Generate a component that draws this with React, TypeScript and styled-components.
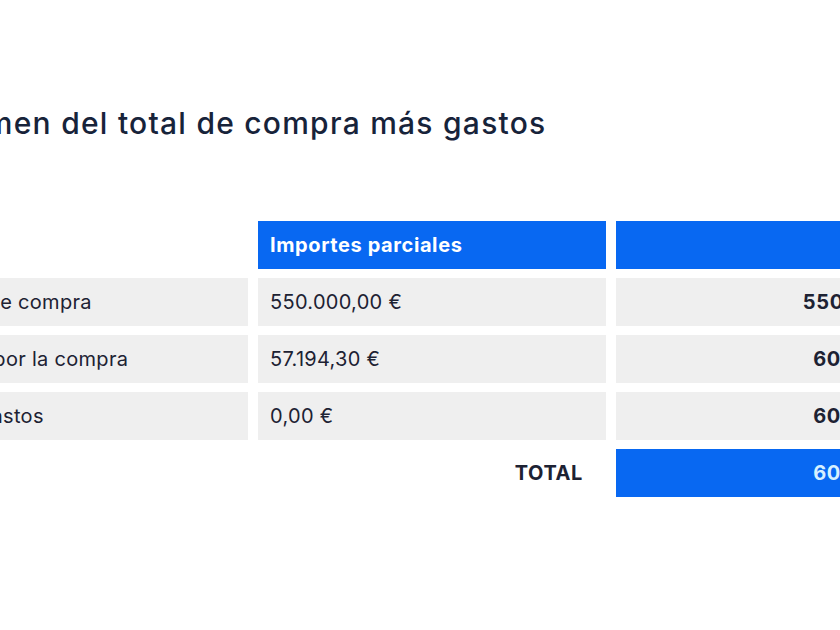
import styled, { createGlobalStyle } from "styled-components";

interface IRow {
  label: string;
  partial: string;
  accumulated: string;
}

const rows: IRow[] = [
  { label: "Precio de compra", partial: "550.000,00 €", accumulated: "550.000,00 €" },
  { label: "Gastos por la compra", partial: "57.194,30 €", accumulated: "607.194,30 €" },
  { label: "Otros gastos", partial: "0,00 €", accumulated: "607.194,30 €" },
];

const GlobalStyle = createGlobalStyle`
  html, body {
    margin: 0;
    padding: 0;
    background: #ffffff;
  }
  body {
    font-family: Inter, "Noto Sans", "Liberation Sans", sans-serif;
  }
`;

const Page = styled.div`
  width: 840px;
  height: 630px;
  overflow: hidden;
  background: #ffffff;
`;

const Content = styled.div`
  margin-left: -92px;
  padding-top: 104px;
  width: 1140px;
`;

const Title = styled.h2`
  margin: 0 0 0 2px;
  font-size: 30px;
  line-height: 38px;
  font-weight: 500;
  color: #17233a;
  letter-spacing: 1.25px;
`;

const Table = styled.div`
  margin-top: 79px;
  display: grid;
  grid-template-columns: 340px 348px 353px;
  grid-auto-rows: 48px;
  column-gap: 10px;
  row-gap: 9px;
`;

const Cell = styled.div<{ $variant?: "head" | "body" | "blank" | "total"; $align?: "left" | "right"; $bold?: boolean }>`
  display: flex;
  align-items: center;
  justify-content: ${(p) => (p.$align === "right" ? "flex-end" : "flex-start")};
  padding: 0 23px 0 12px;
  font-size: 20px;
  letter-spacing: ${(p) => (p.$bold ? "0.6px" : "0.3px")};
  white-space: nowrap;
  font-weight: ${(p) => (p.$bold ? 700 : 400)};
  background: ${(p) =>
    p.$variant === "head" || p.$variant === "total"
      ? "#0868f2"
      : p.$variant === "blank"
      ? "transparent"
      : "#efefef"};
  color: ${(p) =>
    p.$variant === "head"
      ? "#ffffff"
      : p.$variant === "total"
      ? "#d6f1ff"
      : "#1d2233"};
`;

export default function App() {
  return (
    <>
      <GlobalStyle />
      <Page>
        <Content>
          <Title>Resumen del total de compra más gastos</Title>
          <Table>
            <Cell $variant="blank" />
            <Cell $variant="head" $bold>
              Importes parciales
            </Cell>
            <Cell $variant="head" />
            {rows.map((row) => (
              <>
                <Cell key={row.label + "l"}>{row.label}</Cell>
                <Cell key={row.label + "p"}>{row.partial}</Cell>
                <Cell key={row.label + "a"} $align="right" $bold>
                  {row.accumulated}
                </Cell>
              </>
            ))}
            <Cell $variant="blank" />
            <Cell $variant="blank" $align="right" $bold>
              TOTAL
            </Cell>
            <Cell $variant="total" $align="right" $bold>
              607.194,30 €
            </Cell>
          </Table>
        </Content>
      </Page>
    </>
  );
}
